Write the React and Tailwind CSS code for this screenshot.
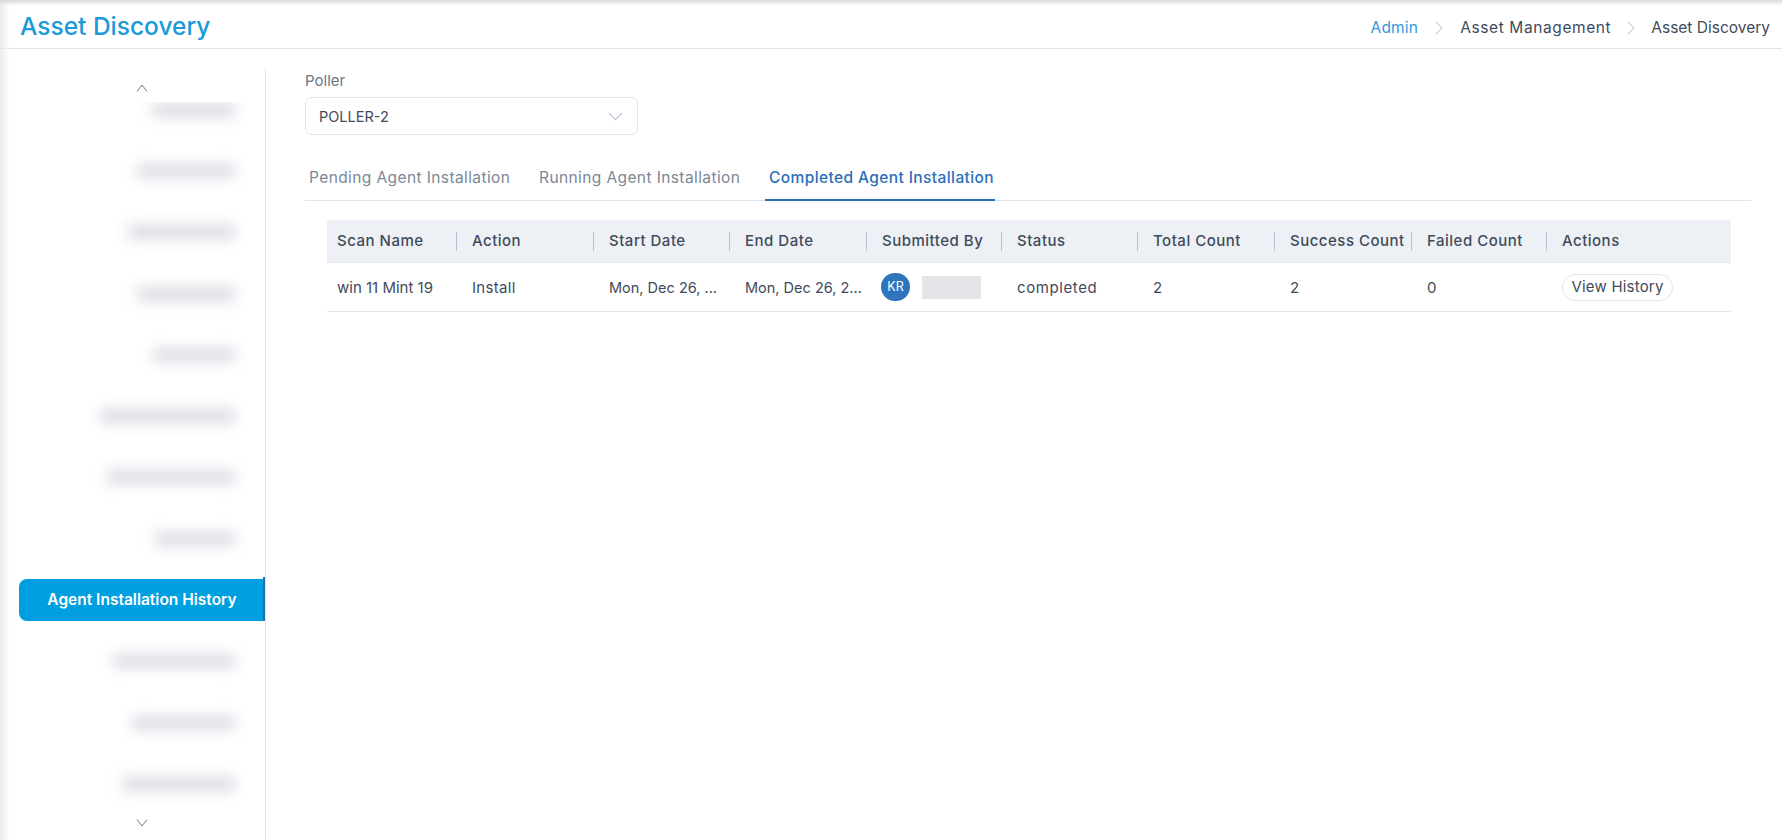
import { ChevronDown, ChevronRight } from "lucide-react";

const sideItems = [
  { w: "w-[83px]" },
  { w: "w-[98px]" },
  { w: "w-[107px]" },
  { w: "w-[98px]" },
  { w: "w-[82px]" },
  { w: "w-[135px]" },
  { w: "w-[128px]" },
  { w: "w-[80px]" },
  { active: true, label: "Agent Installation History" },
  { w: "w-[122px]" },
  { w: "w-[103px]" },
  { w: "w-[113px]" },
];

const columns = ["Scan Name", "Action", "Start Date", "End Date", "Submitted By", "Status", "Total Count", "Success Count", "Failed Count", "Actions"];
const gridCols = "grid grid-cols-[135px_137px_136px_137px_135px_136px_137px_137px_135px_1fr]";
const cell = "pl-[10px] pt-[2px] whitespace-nowrap";

// thin scroll arrow of the side menu
function ScrollArrow({ up }) {
  return (
    <svg width="12" height="10" viewBox="0 0 12 10" fill="none" stroke="#6f7a88" strokeWidth="1">
      <path d={up ? "M1 8.5 6 2l5 6.5" : "M1 1.5 6 8l5-6.5"} />
    </svg>
  );
}

function SideNav() {
  return (
    <aside className="w-[266px] shrink-0 mt-5 h-[771px] border-r border-[#dfe3ea] flex flex-col">
      <div className="h-[33px] flex items-end justify-center pl-[19px] pb-[9px]">
        <ScrollArrow up />
      </div>
      <div className="h-[703px] overflow-hidden">
        <div className="-mt-[23px]">
          {sideItems.map((item, i) =>
            item.active ? (
              <div key={i} className="h-[61.3px] flex items-center pl-[19px] relative">
                <div className="w-full h-[42px] bg-[#009fdf] rounded-l-lg flex items-center justify-center text-white font-semibold text-[15.5px]">
                  {item.label}
                </div>
                <div className="absolute right-0 top-[8px] w-[2px] h-[44px] bg-[#2a6cb5]" />
              </div>
            ) : (
              <div key={i} className="h-[61.3px] w-[248px] overflow-hidden flex items-center justify-end pr-[13px]">
                <div className={`${item.w} h-[14px] bg-[#d9dce2] blur-[7px]`} />
              </div>
            )
          )}
        </div>
      </div>
      <div className="flex justify-center pl-[19px] pt-[13px]">
        <ScrollArrow />
      </div>
    </aside>
  );
}

function App() {
  return (
    <div className="w-[1782px] h-[840px] overflow-hidden bg-[linear-gradient(to_right,#ececee,#ffffff_10px)] font-['Inter','Liberation_Sans',sans-serif] text-[#3f4b5b]">
      <header className="h-[49px] border-b border-[#e1e6ee] bg-[linear-gradient(to_bottom,#d9dbe0,#ffffff00_6px)] flex items-center justify-between pl-5 pr-3">
        <h1 className="text-[24.5px] text-[#1a9ad9] font-medium pt-[4px]">Asset Discovery</h1>
        <div className="flex items-center text-[15.5px] tracking-[0.2px] pt-[7px]">
          <span className="text-[#2f9bdb]">Admin</span>
          <ChevronRight className="w-6 h-6 mx-[9px] text-[#b4bfcc]" strokeWidth={1} />
          <span className="tracking-[0.6px]">Asset Management</span>
          <ChevronRight className="w-6 h-6 mx-[8px] text-[#b4bfcc]" strokeWidth={1} />
          <span className="tracking-normal">Asset Discovery</span>
        </div>
      </header>

      <div className="flex">
        <SideNav />

        <main className="flex-1 pl-[39px] pr-[31px] pt-[22px]">
          <label className="block text-[15px] text-[#6b7787] leading-[20px]">Poller</label>
          <div className="mt-[6px] w-[333px] h-[38px] border border-[#dfe3ea] rounded-md flex items-center justify-between pl-[13px] pr-[9px] text-[14.5px]">
            <span className="pt-px">POLLER-2</span>
            <ChevronDown className="w-[25px] h-[25px] text-[#b4bfcc]" strokeWidth={1} />
          </div>

          <div className="mt-[18px] h-[48px] border-b border-[#dfe3ea] flex items-end text-[15.5px] tracking-[0.4px] text-[#7b8796]">
            <div className="h-[48px] w-[234px] pl-[4px] pt-[14px] whitespace-nowrap">Pending Agent Installation</div>
            <div className="h-[48px] w-[226px] pt-[14px] whitespace-nowrap">Running Agent Installation</div>
            <div className="h-[49px] -mb-px w-[230px] pl-[4px] pt-[14px] whitespace-nowrap text-[#2a6fb9] font-medium border-b-[2px] border-[#2a6fb9]">
              Completed Agent Installation
            </div>
          </div>

          <div className="ml-[22px] mr-[20px] mt-[19px] text-[15px]">
            <div className={`${gridCols} h-[43px] bg-[#edf0f5] border-b border-[#e1e5ec] items-center font-medium tracking-[0.5px]`}>
              {columns.map((c, i) => (
                <div key={c} className={`pl-[10px] mr-[5px] h-[19px] flex items-center whitespace-nowrap ${i < 9 ? "border-r border-[#b5c2d2]" : ""}`}>
                  {c}
                </div>
              ))}
            </div>
            <div className={`${gridCols} h-[49px] border-b border-[#e1e5ec] items-center tracking-[0.3px]`}>
              <div className={`${cell} tracking-normal`}>win 11 Mint 19</div>
              <div className={cell}>Install</div>
              <div className={`${cell} text-[14.5px] tracking-normal`}>Mon, Dec 26, ...</div>
              <div className={`${cell} text-[14.5px] tracking-normal`}>Mon, Dec 26, 2...</div>
              <div className="pl-[9px] flex items-center gap-[12px]">
                <div className="w-[29px] h-[28px] rounded-full bg-[#2f75bd] text-white text-[12.5px] tracking-normal flex items-center justify-center">KR</div>
                <div className="w-[59px] h-[23px] bg-[#e4e5e8]" />
              </div>
              <div className={`${cell} tracking-[0.6px]`}>completed</div>
              <div className={cell}>2</div>
              <div className={cell}>2</div>
              <div className={cell}>0</div>
              <div className="pl-[10px]">
                <button className="w-[111px] h-[27px] border border-[#dfe3ea] rounded-full flex items-center justify-center tracking-[0.2px]">View History</button>
              </div>
            </div>
          </div>
        </main>
      </div>
    </div>
  );
}

export default App;
